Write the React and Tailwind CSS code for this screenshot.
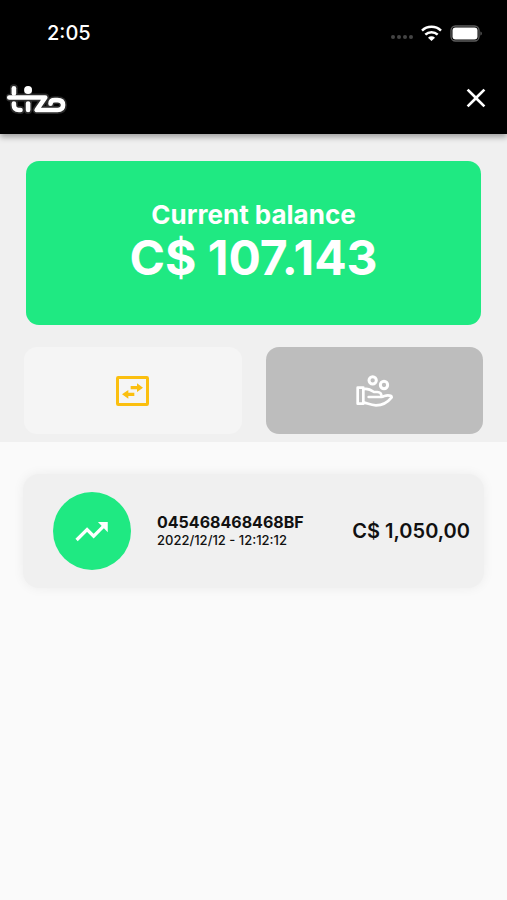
import React from 'react';
import { MdClose } from 'react-icons/md';

const transactions = [
  { id: '045468468468BF', date: '2022/12/12 - 12:12:12', amount: 'C$ 1,050,00' },
];

const WifiIcon = () => (
  <svg viewBox="0 0 63 48" className="h-4 w-[21px]" fill="none" stroke="white" strokeWidth="7.500" aria-hidden="true">
    <path d="M3 17a41 41 0 0 1 57 0" />
    <path d="M13 29a27 27 0 0 1 37 0" />
    <path d="M31.500 48L21 38a15 15 0 0 1 21 0Z" fill="white" stroke="none" />
  </svg>
);

const BatteryIcon = () => (
  <svg viewBox="0 0 33 17" className="h-[17px] w-[33px]" fill="none" aria-hidden="true">
    <rect x="1" y="1" width="28" height="15" rx="4.500" stroke="#5c5c5c" strokeWidth="1.300" />
    <rect x="2.500" y="2.500" width="25" height="12" rx="3" fill="white" />
    <path d="M30.500 6.500v4c1.600-.4 1.600-3.600 0-4Z" fill="#6b6b6b" />
  </svg>
);

const Logo = () => (
  <svg viewBox="15 32 195 100" className="h-[33px] w-[65px]" fill="none" role="img" aria-label="tizo">
    <g stroke="#2b2b2b" strokeWidth="24" strokeLinecap="round" strokeLinejoin="round">
      <path d="M44 51v51q0 15 15 15h5M32 79H139L113 117H176q17 0 17-15q0-15-17-15h-8q-14 0-14 14M87 57v60" />
    </g>
    <g stroke="white" strokeWidth="14" strokeLinecap="round" strokeLinejoin="round">
      <path d="M44 51v16" />
      <path d="M30 79H139L113 117H176q17 0 17-15q0-15-17-15h-8q-13 0-13 11" />
      <path d="M44 97v5q0 15 15 15h5" />
      <path d="M87 97v20" />
    </g>
    <circle cx="87" cy="56" r="12" fill="white" />
  </svg>
);

const TransferIcon = () => (
  <svg viewBox="0 0 99 90" className="h-[30px] w-[33px]" aria-hidden="true">
    <rect x="4.500" y="4.500" width="90" height="81" rx="2" fill="none" stroke="#fbbf0f" strokeWidth="9" />
    <path d="M44 30h19v-8l18 13-18 13v-8H44ZM55 50H37v-8L18 55l19 13v-8h18Z" fill="#fbbf0f" />
  </svg>
);

const DonateIcon = () => (
  <svg
    viewBox="0 0 111 96"
    className="h-8 w-[37px]"
    fill="none"
    stroke="white"
    strokeWidth="8"
    strokeLinejoin="round"
    strokeLinecap="round"
    aria-hidden="true"
  >
    <circle cx="50" cy="16" r="11" strokeWidth="9" />
    <circle cx="84" cy="30" r="11" strokeWidth="9" />
    <path d="M5 38h17v48H5Z" />
    <path d="M22 43c12-5 23 2 32 8h10c9 0 12 6 12 10" />
    <path d="M38 66h38c8-1 12-5 19-5q12 0 12 6C95 82 81 91 60 91c-16 0-25-6-38-9" />
  </svg>
);

const TrendIcon = () => (
  <svg viewBox="0 0 102 64" className="h-[21px] w-[34px]" aria-hidden="true">
    <path d="M4 58L36 26l20 20L88 14" fill="none" stroke="white" strokeWidth="10" />
    <path d="M69 3h30v31Z" fill="white" />
  </svg>
);

const Header = () => (
  <header className="relative z-10 bg-black pb-1 text-white shadow-[0_3px_6px_rgba(0,0,0,0.35)]">
    <div className="flex h-[66px] items-center justify-between pr-6 pl-[47px]">
      <span className="text-[20px] leading-6 font-medium">2:05</span>
      <div className="flex items-center gap-2">
        <div className="flex gap-[2px] pt-2">
          <i className="size-1 rounded-full bg-[#444]" />
          <i className="size-1 rounded-full bg-[#444]" />
          <i className="size-1 rounded-full bg-[#444]" />
          <i className="size-1 rounded-full bg-[#444]" />
        </div>
        <WifiIcon />
        <BatteryIcon />
      </div>
    </div>
    <div className="flex h-16 items-center justify-between pr-[15px] pl-1">
      <Logo />
      <button type="button" aria-label="Close">
        <MdClose className="size-8" />
      </button>
    </div>
  </header>
);

const TransactionCard = ({ id, date, amount }) => (
  <li className="flex items-center rounded-2xl bg-[#f0f0f0] py-[18px] pr-[14px] pl-[30px] shadow-[0_0_12px_rgba(0,0,0,0.06)]">
    <div className="flex size-[78px] shrink-0 items-center justify-center rounded-full bg-[#1fe982]">
      <TrendIcon />
    </div>
    <div className="ml-[26px] flex-1">
      <p className="text-[16px] leading-[18px] font-bold">{id}</p>
      <p className="text-[13px] leading-[18px] font-medium">{date}</p>
    </div>
    <p className="text-[20px] leading-6 font-semibold whitespace-nowrap">{amount}</p>
  </li>
);

const App = () => {
  return (
    <div className="min-h-screen bg-[#fafafa] font-['Inter',sans-serif] text-[#111]">
      <Header />
      <main>
        <section className="bg-[#f0f0f0] px-6 pt-[27px] pb-2">
          <div className="mx-[2px] flex flex-col items-center rounded-[13px] bg-[#1fe982] pt-[38px] pb-10 text-white">
            <h1 className="text-[26px] leading-8 font-bold">Current balance</h1>
            <p className="text-[48px] leading-[54px] font-bold">C$ 107.143</p>
          </div>
          <div className="mt-[22px] grid grid-cols-2 gap-6">
            <button
              type="button"
              aria-label="Transfer"
              className="flex h-[87px] items-center justify-center rounded-[13px] bg-[#f5f5f5]"
            >
              <TransferIcon />
            </button>
            <button
              type="button"
              aria-label="Donate"
              className="flex h-[87px] items-center justify-center rounded-[13px] bg-[#bdbdbd]"
            >
              <DonateIcon />
            </button>
          </div>
        </section>
        <ul className="px-[23px] pt-8">
          {transactions.map((item) => (
            <TransactionCard key={item.id} {...item} />
          ))}
        </ul>
      </main>
    </div>
  );
};

export default App;
